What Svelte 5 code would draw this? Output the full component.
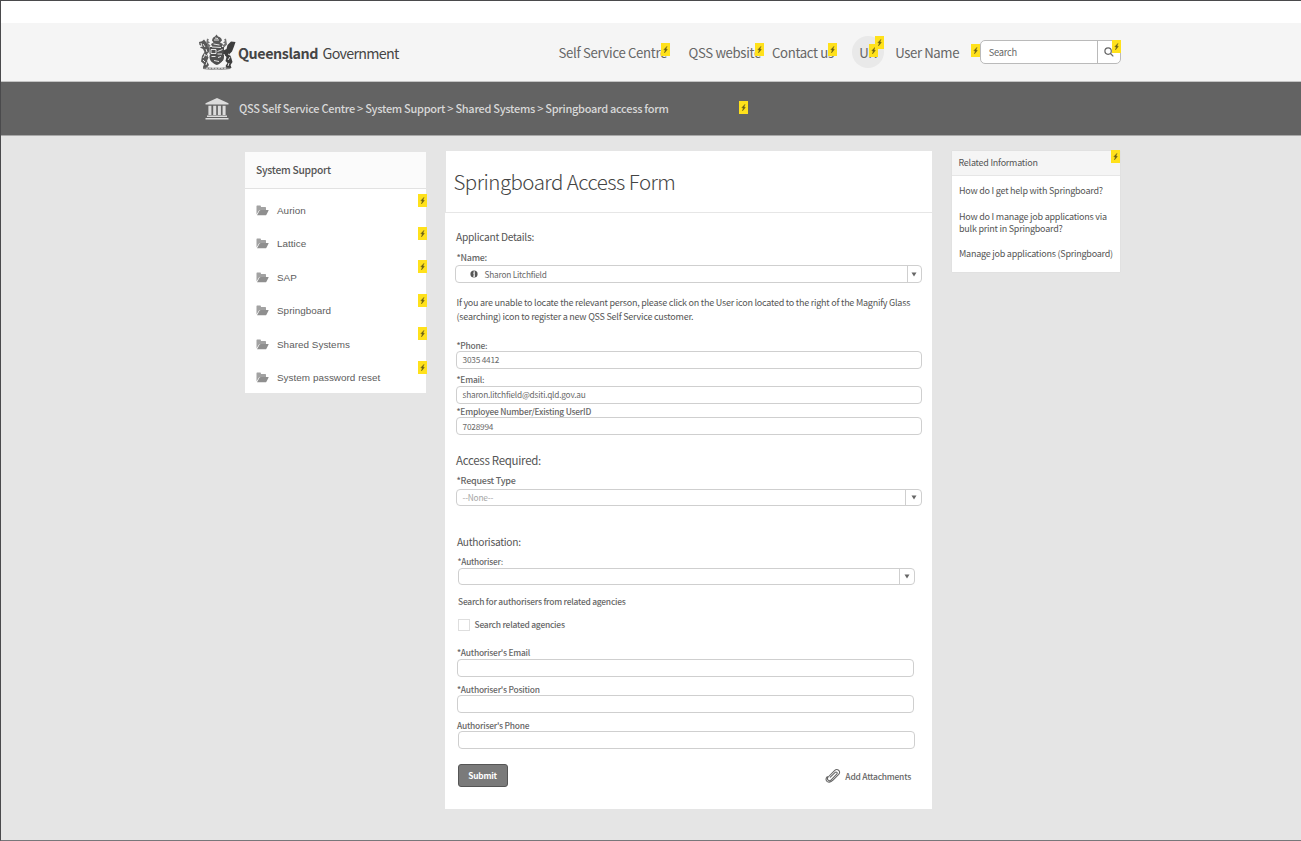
<script>
  const topics = ['Aurion', 'Lattice', 'SAP', 'Springboard', 'Shared Systems', 'System password reset'];
  const related = [
    'How do I get help with Springboard?',
    'How do I manage job applications via bulk print in Springboard?',
    'Manage job applications (Springboard)'
  ];
</script>

{#snippet flag(place)}
  <svg class="flag {place}" viewBox="0 0 9 13" aria-hidden="true">
    <rect width="9" height="13" fill="#ffe11b" />
    <path d="M6 3.300 2.800 6.700l1.500.4-.9 2.900 3-3.500-1.400-.4z" fill="#6b6118" stroke="#6b6118" stroke-width=".4" />
  </svg>
{/snippet}

{#snippet arrow()}
  <span class="arrow"><svg width="6" height="5" viewBox="0 0 6 5"><path d="M.5.400h5L3 4.600z" fill="#666" /></svg></span>
{/snippet}

<div class="page">
  <header>
    <a class="brand" href="#home">
      <svg class="crest" viewBox="0 0 38 36" fill="#3d3d3d">
        <path d="M14 6.500c.3-2.400 1.500-3.600 3-4L18.500.5l1.500 2c2 .3 3.500 1.500 4 4l-2 2 3 1.500-1.500 3.500h-9L13 10l2.500-1.500z" opacity=".85" />
        <path d="M9 4.500l2 1-1 1.500 2 1.500-2 1 2.500 2-1.500 2-3-3zM28 4.500l-2 1 1 1.500-2 1.500 2 1-2.500 2 1.500 2 3-3z" opacity=".7" />
        <path d="M11.500 13h14.500v10c0 4-3.500 6.500-7.200 8-3.800-1.500-7.300-4-7.300-8z" opacity=".9" />
        <path d="M1 8l3-.8L6 5.500l2 2.500 1.500 4 2 2-.5 4-2 2 1.500 3.500L9 27l2 4-2 2.500H5L6 30l-3-2.500L4 22l2.500-4-1.500-3-3-1.500 2-1.500-2.500-1z" opacity=".85" />
        <path d="M37.500 8L33 7.500l-3.500 3.500-1 4-3 1.500V20l3 3-1 4 2 2-2 3 1 1.500 5 .5-1-3 2-3-1.500-5-1.500-3 2.500-2.500 2-5z" />
        <path d="M13 15.500h5v4h-5zM19.500 17.500l5-2M19.500 20h4.500M13.500 22.500h4M20 23.500l3-1M16 26.500l5 1M15.500 10l6 1M16 6h5M17 4l3 .5M5 10l2 3M3 9l1 4M8 15l1 3M5 24l2-3M6 20l3 2M7 28l-2-2M8 31l1-3M32 23l-2 3M30 20l2 1M31 29l-1 3M12 28l3 3M23 30l2-3M14 13l9 .500M12 20l-2 3M26 20l1 3" stroke="#f5f5f5" stroke-width=".9" fill="none" />
        <path d="M5 32.500q6 1.500 13.500 1 7.500.5 14-1v2.500q-7 1-14 .5-7.500.5-13.500-.5z" opacity=".65" />
        <path d="M8 34.200h21" stroke="#f5f5f5" stroke-width=".8" stroke-dasharray="2 1" />
      </svg>
      <span class="state">Queensland</span><span class="gov">Government</span>
    </a>
    <nav>
      <a class="ssc" href="#ssc">Self Service Centre{@render flag('end')}</a>
      <a class="web" href="#web">QSS website{@render flag('end')}</a>
      <a class="contact" href="#contact">Contact us{@render flag('end')}</a>
    </nav>
    <div class="avatar">UN{@render flag('inner')}{@render flag('outer')}</div>
    <span class="user">User Name</span>
    <div class="search">
      {@render flag('before')}
      <span>Search</span>
      <div class="go">
        <svg width="10" height="10" viewBox="0 0 10 10" fill="none" stroke="#666" stroke-width="1.200"><circle cx="4.100" cy="4.100" r="3.200" /><path d="M6.500 6.500l2.800 2.800" /></svg>
      </div>
      {@render flag('corner')}
    </div>
  </header>

  <div class="crumbs">
    <svg class="bank" width="24" height="22" viewBox="0 0 24 22" fill="#dcdcdc">
      <path d="M12 0l11.500 5.200v1.300H.5V5.200zM3.400 7.800h3v9.200h-3zM8.200 7.800h3v9.200h-3zM12.900 7.800h3v9.200h-3zM17.600 7.800h3v9.200h-3zM2 17.600h20v1.400H2zM.5 20h23v1.500H.5z" />
    </svg>
    <span class="trail">QSS Self Service Centre &gt; System Support &gt; Shared Systems &gt; Springboard access form</span>
    {@render flag('trailflag')}
  </div>

  <main>
    <aside class="topics">
      <h2>System Support</h2>
      <ul>
        {#each topics as topic}
          <li>
            <svg width="13" height="11" viewBox="0 0 13 11"><path d="M.5 9.500V1.200Q.5.600 1.100.6h3.200q.6 0 .6.600v.9h4.400q.7 0 .7.700v2.100H4.400q-1 0-1.600.9z" fill="#a2a2a2" /><path d="M1 10.200l2.600-4.600q.3-.5 1-.5h7.700q.5 0 .3.500l-2.200 4.100q-.3.500-.9.500z" fill="#8f8f8f" /></svg>
            <span>{topic}</span>
            {@render flag('side')}
          </li>
        {/each}
      </ul>
    </aside>

    <section class="card">
      <h1>Springboard Access Form</h1>
      <form>
        <h3 class="s1">Applicant Details:</h3>
        <label class="l-name" for="name">*Name:</label>
        <div class="box f-name" id="name">
          <svg width="8" height="8" viewBox="0 0 8 8"><circle cx="4" cy="4" r="3.600" fill="#555" /><path d="M4.200 1.300v5.200M3.300 3.200h1M3.200 6.300h1.800" stroke="#fff" stroke-width="1.100" /></svg>
          <span class="value">Sharon Litchfield</span>
          {@render arrow()}
        </div>
        <p class="note">If you are unable to locate the relevant person, please click on the User icon located to the right of the Magnify Glass<br />(searching) icon to register a new QSS Self Service customer.</p>
        <label class="l-phone" for="phone">*Phone:</label>
        <div class="box f-phone" id="phone">3035 4412</div>
        <label class="l-email" for="email">*Email:</label>
        <div class="box f-email" id="email">sharon.litchfield@dsiti.qld.gov.au</div>
        <label class="l-emp" for="emp">*Employee Number/Existing UserID</label>
        <div class="box f-emp" id="emp">7028994</div>

        <h3 class="s2">Access Required:</h3>
        <label class="l-type" for="type">*Request Type</label>
        <div class="box f-type" id="type"><span class="value">--None--</span>{@render arrow()}</div>

        <h3 class="s3">Authorisation:</h3>
        <label class="l-auth" for="auth">*Authoriser:</label>
        <div class="box f-auth" id="auth">{@render arrow()}</div>
        <p class="hint">Search for authorisers from related agencies</p>
        <div class="check"><i></i><span>Search related agencies</span></div>
        <label class="l-aemail" for="aemail">*Authoriser's Email</label>
        <div class="box f-aemail" id="aemail"></div>
        <label class="l-apos" for="apos">*Authoriser's Position</label>
        <div class="box f-apos" id="apos"></div>
        <label class="l-aphone" for="aphone">Authoriser's Phone</label>
        <div class="box f-aphone" id="aphone"></div>

        <div class="actions">
          <button type="button">Submit</button>
          <div class="attach">
            <svg width="16" height="15" viewBox="0 0 16 15" fill="none" stroke="#666" stroke-width="1.050" stroke-linecap="round" stroke-linejoin="round"><path d="M5.300 9.200l4.600-4.600c1.500-1.500 3.100.2 1.800 1.600l-5.500 5.600c-2.200 2.200-5-.6-3-2.800l6.300-6.400c2.800-2.800 6.700.6 4.200 3.800L8 12.200c-2.200 2.300-4.500 2.200-6 1.100-1.500-1.500-1-3.300.3-4.700" /></svg>
            <span>Add Attachments</span>
          </div>
        </div>
      </form>
    </section>

    <aside class="related">
      <h2>Related Information</h2>
      {#each related as item}<p>{item}</p>{/each}
      {@render flag('relflag')}
    </aside>
  </main>
</div>

<style>
  :global(body) { background: #e5e5e5; }
  .page {
    box-sizing: border-box; width: 1301px; height: 841px; overflow: hidden;
    border-top: 1px solid #4a4a4c; border-left: 1px solid #4a4a4c; border-bottom: 1px solid #77777a;
    background: #e5e5e5; color: #555;
    font-family: "Noto Sans CJK SC", "Open Sans", sans-serif;
    display: flex; flex-direction: column;
  }
  h1, h2, h3, p, ul { margin: 0; padding: 0; list-style: none; font-weight: 400; }
  a { color: inherit; text-decoration: none; }
  svg { display: block; flex: none; }
  nav, .avatar, .user, .search span, h1, h2, h3, label, .note, .hint, .check, .box, .attach, .related p { letter-spacing: -.026em; }

  .flag { position: absolute; width: 9px; height: 13px; }
  .flag.end { right: -2.500px; top: 0; }
  .flag.inner { left: 17px; top: 7.500px; }
  .flag.outer { left: 23px; top: 0; }
  .flag.before { left: -9.500px; top: 3px; }
  .flag.corner { right: -1px; top: -1px; }
  .flag.trailflag { left: 737.500px; top: 19px; }
  .flag.side { right: -1px; top: 0; }
  .flag.relflag { right: 0; top: -1px; }

  header {
    box-sizing: border-box; height: 81px; flex: none; padding: 22px 0 0 197px;
    background: linear-gradient(#fff 22px, #f5f5f5 22px); border-bottom: 1px solid #c4c4c4;
    display: flex; align-items: center; font-size: 13.200px; line-height: 20px; color: #666;
  }
  .brand { display: flex; width: 360.500px; align-items: center; color: #454545; }
  .crest { width: 38px; height: 36px; margin-top: 0; }
  .state { font-weight: 700; font-size: 14.300px; letter-spacing: -.43px; width: 84.500px; margin-left: 2px; margin-top: 2px; }
  .gov { font-size: 14.300px; letter-spacing: -.72px; margin-top: 2px; }
  nav { display: flex; width: 293.700px; padding-top: 1px; }
  nav a { position: relative; white-space: nowrap; }
  .ssc { width: 108.500px; margin-right: 21.500px; }
  .web { width: 72.500px; margin-right: 11px; }
  .contact { width: 62px; }
  .avatar { position: relative; width: 32px; height: 32px; border-radius: 50%; background: #e9e9e9; line-height: 33px; box-sizing: border-box; padding-left: 7px; }
  .user { margin-left: 11px; width: 84.500px; padding-top: 1px; letter-spacing: -.4px; }
  nav .flag { top: 0; }
  .search { position: relative; box-sizing: border-box; width: 141px; height: 24px; border: 1px solid #bababa; border-radius: 5px; background: #fff; display: flex; justify-content: space-between; align-items: center; font-size: 9.300px; padding-left: 8px; }
  .go { border-left: 1px solid #bababa; width: 23px; height: 22px; display: flex; align-items: center; box-sizing: border-box; }
  .go svg { margin-left: 6.500px; }

  .crumbs { position: relative; box-sizing: border-box; height: 54px; flex: none; background: #636363; border-bottom: 1px solid #a8a8a8; display: flex; align-items: center; padding-left: 204px; color: #d8d8d8; }
  .trail { font-size: 11px; font-weight: 500; margin-left: 10px; padding-bottom: 2px; line-height: 16px; white-space: nowrap; letter-spacing: -.29px; }

  main { display: grid; grid-template-columns: 181px 487px 168px; column-gap: 19px; padding: 15px 0 0 244px; align-items: start; }
  .topics { margin-top: 1px; height: 241px; background: #fff; }
  .topics h2 { box-sizing: border-box; height: 37px; padding: 0 0 0 11px; border-bottom: 1px solid #e2e2e2; background: #fbfbfb; font: 500 10.300px/36px "Noto Sans CJK SC", sans-serif; }
  .topics ul { padding-top: 4.600px; font: 9.900px "Liberation Sans", sans-serif; }
  .topics li { position: relative; display: flex; align-items: center; height: 33.450px; padding-left: 11px; letter-spacing: .03px; color: #5c5c5c; }
  .topics li span { margin-left: 8px; }

  .card { background: linear-gradient(90deg, #e5e5e5 1px, #fff 1px) no-repeat 0 0 / 100% 61px, #fff; height: 658px; width: 487px; white-space: nowrap; }
  h1 { box-sizing: border-box; height: 62px; padding-left: 8.500px; border-bottom: 1px solid #e6e6e6; font-weight: 300; font-size: 20.500px; line-height: 60px; color: #444; }
  form { font-size: 8.700px; padding-left: 12px; }
  h3 { font-size: 10.200px; line-height: 12px; margin-left: -1px; }
  label, .hint { display: block; font-weight: 500; font-size: 8.420px; line-height: 8px; height: 10px; color: #666; margin-left: -.5px; }
  .box { box-sizing: border-box; height: 18px; width: 466px; margin-left: -1px; border: 1px solid #cfcfcf; border-radius: 4px; padding-left: 5.500px; display: flex; align-items: center; font-size: 8.300px; line-height: 16px; color: #6a6a6a; }
  .f-phone, .f-email { line-height: 14px; padding-bottom: 2px; }
  .arrow { margin-left: auto; align-self: stretch; width: 15px; border-left: 1px solid #cfcfcf; display: flex; align-items: center; justify-content: center; }
  .s1 { padding-top: 18px; }
  .l-name { margin-top: 9px; font-size: 8.850px; line-height: 12px; }
  .f-name { margin: 3px 0 0 -2px; width: 467px; padding-left: 14px; }
  .f-name .value { margin-left: 6.500px; }
  .f-name .arrow { width: 14px; padding-right: 2px; box-sizing: border-box; }
  .note { margin-top: 13px; font-size: 9px; line-height: 14px; margin-left: -.5px; }
  .l-phone { margin-top: 17px; }
  .f-email { margin-top: 1px; }
  .l-email { margin-top: 6px; }
  .l-emp { margin-top: 3px; }
  .s2 { margin-top: 19px; font-size: 11.500px; }
  .l-type { margin-top: 9px; font-size: 9px; line-height: 12px; }
  .f-type { margin-top: 4px; height: 17px; color: #a5a5a5; }
  .f-type .value { line-height: 14px; margin-bottom: 2px; }
  .s3 { margin: 30px 0 0; }
  .l-auth { margin: 9px 0 0 .5px; font-size: 8.250px; }
  .f-auth { margin: 1px 0 0 1px; width: 457px; height: 17px; }
  .f-auth .arrow { width: 14px; }
  .hint { margin: 12px 0 0 1px; }
  .check { display: flex; align-items: center; height: 12px; margin: 12px 0 0 1px; font-weight: 500; font-size: 8.450px; line-height: 10px; color: #666; }
  .check i { box-sizing: border-box; width: 12px; height: 12px; border: 1px solid #dedede; }
  .check span { margin: 0 0 2px 4.500px; }
  .l-aemail { margin: 17px 0 0; }
  .l-apos { margin: 8px 0 0; }
  .l-aphone { margin: 8px 0 0; }
  .f-aemail, .f-apos { margin: 1px 0 0; width: 457px; }
  .f-apos { margin-top: 0; }
  .f-aphone { margin: 0 0 0 1px; width: 457px; }
  .actions { display: flex; justify-content: space-between; align-items: center; width: 454px; height: 23px; margin-top: 15px; }
  button { box-sizing: border-box; width: 50px; height: 23px; margin-left: 1px; padding: 0 1px 1px 0; border: 1px solid #555; border-radius: 3px; background: #7a7a7a; color: #fff; font: 700 8.300px/20px "Noto Sans CJK SC", sans-serif; letter-spacing: -.026em; }
  .attach { display: flex; align-items: center; font-weight: 500; font-size: 8.450px; line-height: 14px; color: #666; }
  .attach span { margin-left: 4px; padding-top: 1px; }

  .related { position: relative; height: 121px; margin-left: 1px; width: 168px; background: #fff; font-size: 9px; line-height: 12px; color: #555; box-shadow: 0 0 1px #ccc; }
  .related h2 { box-sizing: border-box; height: 25px; background: #f5f5f5; border-bottom: 1px solid #e6e6e6; font-size: 8.980px; line-height: 23px; padding-left: 6.500px; margin-bottom: 9px; }
  .related p { margin: 0 0 14px 7px; width: 160px; }
  .related p:nth-of-type(2) { margin-bottom: 13px; }
</style>
